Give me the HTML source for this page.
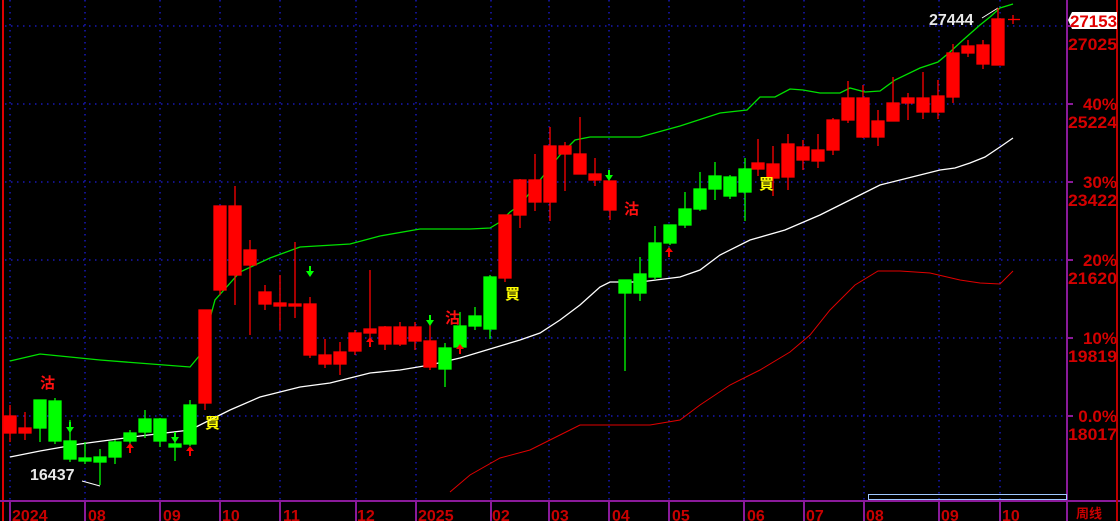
<!DOCTYPE html>
<html><head><meta charset="utf-8"><style>
html,body{margin:0;padding:0;background:#000;width:1120px;height:521px;overflow:hidden}
svg{display:block}
text{font-family:"Liberation Sans","Noto Sans CJK SC",sans-serif;font-weight:bold}
</style></head><body>
<svg width="1120" height="521" viewBox="0 0 1120 521" xmlns="http://www.w3.org/2000/svg">
<rect width="1120" height="521" fill="#000"/>
<line x1="3" y1="0" x2="3" y2="521" stroke="#e00000" stroke-width="2"/>
<g stroke="#1c1cd8" stroke-width="1.3" stroke-dasharray="1.5,4.5">
<line x1="5" y1="26" x2="1066" y2="26"/><line x1="5" y1="104" x2="1066" y2="104"/><line x1="5" y1="182" x2="1066" y2="182"/><line x1="5" y1="260" x2="1066" y2="260"/><line x1="5" y1="338" x2="1066" y2="338"/><line x1="5" y1="416" x2="1066" y2="416"/>
<line x1="10" y1="0" x2="10" y2="500"/><line x1="85" y1="0" x2="85" y2="500"/><line x1="160" y1="0" x2="160" y2="500"/><line x1="220" y1="0" x2="220" y2="500"/><line x1="280" y1="0" x2="280" y2="500"/><line x1="356" y1="0" x2="356" y2="500"/><line x1="416" y1="0" x2="416" y2="500"/><line x1="491" y1="0" x2="491" y2="500"/><line x1="549" y1="0" x2="549" y2="500"/><line x1="609" y1="0" x2="609" y2="500"/><line x1="669" y1="0" x2="669" y2="500"/><line x1="744" y1="0" x2="744" y2="500"/><line x1="804" y1="0" x2="804" y2="500"/><line x1="864" y1="0" x2="864" y2="500"/><line x1="939" y1="0" x2="939" y2="500"/><line x1="1000" y1="0" x2="1000" y2="500"/>
</g>
<line x1="1067" y1="0" x2="1067" y2="521" stroke="#8a1a9a" stroke-width="2"/>
<line x1="0" y1="501" x2="1120" y2="501" stroke="#8a1a9a" stroke-width="2"/>
<line x1="1117" y1="0" x2="1117" y2="521" stroke="#c00000" stroke-width="2"/>
<g stroke="#8a1a9a" stroke-width="2"><line x1="1067" y1="26" x2="1073" y2="26"/><line x1="1067" y1="104" x2="1073" y2="104"/><line x1="1067" y1="182" x2="1073" y2="182"/><line x1="1067" y1="260" x2="1073" y2="260"/><line x1="1067" y1="338" x2="1073" y2="338"/><line x1="1067" y1="416" x2="1073" y2="416"/>
<line x1="10" y1="502" x2="10" y2="521"/><line x1="85" y1="502" x2="85" y2="521"/><line x1="160" y1="502" x2="160" y2="521"/><line x1="220" y1="502" x2="220" y2="521"/><line x1="280" y1="502" x2="280" y2="521"/><line x1="356" y1="502" x2="356" y2="521"/><line x1="416" y1="502" x2="416" y2="521"/><line x1="491" y1="502" x2="491" y2="521"/><line x1="549" y1="502" x2="549" y2="521"/><line x1="609" y1="502" x2="609" y2="521"/><line x1="669" y1="502" x2="669" y2="521"/><line x1="744" y1="502" x2="744" y2="521"/><line x1="804" y1="502" x2="804" y2="521"/><line x1="864" y1="502" x2="864" y2="521"/><line x1="939" y1="502" x2="939" y2="521"/><line x1="1000" y1="502" x2="1000" y2="521"/><line x1="1067" y1="502" x2="1067" y2="521"/></g>
<rect x="868.5" y="494.5" width="198" height="5" fill="none" stroke="#a0c8ff" stroke-width="1"/>

<polyline fill="none" stroke="#00e000" stroke-width="1.3" points="10,361 40,354 100,360 190,367 200,355 215,300 240,272 270,258 300,247 350,244 380,236 420,229 470,229 490,228 500,222 510,212 520,205 540,180 560,155 575,140 590,137 640,137 680,126 720,113 747,110 760,97 775,97 790,89 803,90 820,93 840,93 850,88 865,92 880,91 895,80 920,68 938,62 950,52 963,40 980,25 990,17 1000,8 1013,4"/>
<polyline fill="none" stroke="#ffffff" stroke-width="1.3" points="10,457 40,451 80,444 140,436 190,430 230,410 260,397 300,387 330,383 370,373 400,370 430,365 460,358 480,352 500,346 520,340 540,333 560,320 580,305 600,287 610,282 640,282 680,277 700,270 720,255 750,240 785,230 820,215 860,195 880,185 900,180 920,175 940,170 955,168 970,163 985,157 1000,147 1013,138"/>
<polyline fill="none" stroke="#e00000" stroke-width="1" points="450,492 470,475 500,458 530,450 560,435 580,425 600,425 650,425 680,420 700,405 730,385 760,370 790,352 810,335 830,310 855,285 878,271 900,271 930,273 960,280 980,283 1000,284 1013,271"/>
<polyline fill="none" stroke="#ffffff" stroke-width="1" points="82,481 100,486"/>
<polyline fill="none" stroke="#ffffff" stroke-width="1" points="982,18 998,8"/>

<g stroke="#ff0000" fill="#ff0000" stroke-width="1.3">
<line x1="10" y1="405" x2="10" y2="442"/><rect x="4" y="416" width="12" height="17"/>
<line x1="25" y1="412" x2="25" y2="440"/><rect x="19" y="428" width="12" height="5"/>
<line x1="205" y1="310" x2="205" y2="410"/><rect x="199" y="310" width="12" height="93"/>
<line x1="220" y1="206" x2="220" y2="295"/><rect x="214" y="206" width="12" height="84"/>
<line x1="235" y1="186" x2="235" y2="305"/><rect x="229" y="206" width="12" height="69"/>
<line x1="250" y1="240" x2="250" y2="335"/><rect x="244" y="250" width="12" height="15"/>
<line x1="265" y1="285" x2="265" y2="310"/><rect x="259" y="292" width="12" height="12"/>
<line x1="280" y1="275" x2="280" y2="330"/><rect x="274" y="303" width="12" height="3"/>
<line x1="295" y1="242" x2="295" y2="318"/><rect x="289" y="304" width="12" height="2"/>
<line x1="310" y1="297" x2="310" y2="358"/><rect x="304" y="304" width="12" height="51"/>
<line x1="325" y1="339" x2="325" y2="368"/><rect x="319" y="355" width="12" height="9"/>
<line x1="340" y1="342" x2="340" y2="375"/><rect x="334" y="352" width="12" height="12"/>
<line x1="355" y1="330" x2="355" y2="355"/><rect x="349" y="333" width="12" height="18"/>
<line x1="370" y1="270" x2="370" y2="345"/><rect x="364" y="329" width="12" height="4"/>
<line x1="385" y1="326" x2="385" y2="350"/><rect x="379" y="327" width="12" height="17"/>
<line x1="400" y1="322" x2="400" y2="346"/><rect x="394" y="327" width="12" height="17"/>
<line x1="415" y1="322" x2="415" y2="350"/><rect x="409" y="327" width="12" height="14"/>
<line x1="430" y1="319" x2="430" y2="370"/><rect x="424" y="341" width="12" height="26"/>
<line x1="505" y1="215" x2="505" y2="282"/><rect x="499" y="215" width="12" height="63"/>
<line x1="520" y1="179" x2="520" y2="228"/><rect x="514" y="180" width="12" height="35"/>
<line x1="535" y1="154" x2="535" y2="211"/><rect x="529" y="180" width="12" height="22"/>
<line x1="550" y1="127" x2="550" y2="221"/><rect x="544" y="146" width="12" height="56"/>
<line x1="565" y1="142" x2="565" y2="191"/><rect x="559" y="146" width="12" height="8"/>
<line x1="580" y1="117" x2="580" y2="174"/><rect x="574" y="154" width="12" height="20"/>
<line x1="595" y1="158" x2="595" y2="186"/><rect x="589" y="174" width="12" height="6"/>
<line x1="610" y1="181" x2="610" y2="220"/><rect x="604" y="181" width="12" height="29"/>
<line x1="758" y1="139" x2="758" y2="176"/><rect x="752" y="163" width="12" height="6"/>
<line x1="773" y1="146" x2="773" y2="196"/><rect x="767" y="164" width="12" height="14"/>
<line x1="788" y1="134" x2="788" y2="190"/><rect x="782" y="144" width="12" height="33"/>
<line x1="803" y1="140" x2="803" y2="170"/><rect x="797" y="147" width="12" height="13"/>
<line x1="818" y1="134" x2="818" y2="168"/><rect x="812" y="150" width="12" height="11"/>
<line x1="833" y1="118" x2="833" y2="155"/><rect x="827" y="120" width="12" height="30"/>
<line x1="848" y1="81" x2="848" y2="123"/><rect x="842" y="98" width="12" height="22"/>
<line x1="863" y1="85" x2="863" y2="138"/><rect x="857" y="98" width="12" height="39"/>
<line x1="878" y1="110" x2="878" y2="146"/><rect x="872" y="121" width="12" height="16"/>
<line x1="893" y1="77" x2="893" y2="120"/><rect x="887" y="103" width="12" height="18"/>
<line x1="908" y1="93" x2="908" y2="120"/><rect x="902" y="98" width="12" height="5"/>
<line x1="923" y1="72" x2="923" y2="119"/><rect x="917" y="98" width="12" height="14"/>
<line x1="938" y1="80" x2="938" y2="119"/><rect x="932" y="96" width="12" height="16"/>
<line x1="953" y1="44" x2="953" y2="103"/><rect x="947" y="53" width="12" height="44"/>
<line x1="968" y1="40" x2="968" y2="57"/><rect x="962" y="46" width="12" height="7"/>
<line x1="983" y1="40" x2="983" y2="69"/><rect x="977" y="45" width="12" height="19"/>
<line x1="998" y1="8" x2="998" y2="65"/><rect x="992" y="19" width="12" height="46"/>
<line x1="1013" y1="15" x2="1013" y2="24"/><line x1="1008" y1="19.5" x2="1020" y2="19.5"/>
</g>
<g stroke="#00ff00" fill="#00ff00" stroke-width="1.3">
<line x1="40" y1="400" x2="40" y2="442"/><rect x="34" y="400" width="12" height="28"/>
<line x1="55" y1="398" x2="55" y2="444"/><rect x="49" y="401" width="12" height="40"/>
<line x1="70" y1="420" x2="70" y2="462"/><rect x="64" y="441" width="12" height="18"/>
<line x1="85" y1="442" x2="85" y2="464"/><rect x="79" y="458" width="12" height="3"/>
<line x1="100" y1="449" x2="100" y2="485"/><rect x="94" y="457" width="12" height="5"/>
<line x1="115" y1="440" x2="115" y2="464"/><rect x="109" y="442" width="12" height="15"/>
<line x1="130" y1="430" x2="130" y2="444"/><rect x="124" y="433" width="12" height="8"/>
<line x1="145" y1="410" x2="145" y2="438"/><rect x="139" y="419" width="12" height="13"/>
<line x1="160" y1="418" x2="160" y2="447"/><rect x="154" y="419" width="12" height="22"/>
<line x1="175" y1="432" x2="175" y2="461"/><rect x="169" y="444" width="12" height="3"/>
<line x1="190" y1="400" x2="190" y2="446"/><rect x="184" y="405" width="12" height="39"/>
<line x1="445" y1="343" x2="445" y2="387"/><rect x="439" y="348" width="12" height="21"/>
<line x1="460" y1="312" x2="460" y2="352"/><rect x="454" y="326" width="12" height="21"/>
<line x1="475" y1="307" x2="475" y2="330"/><rect x="469" y="316" width="12" height="10"/>
<line x1="490" y1="275" x2="490" y2="339"/><rect x="484" y="277" width="12" height="52"/>
<line x1="625" y1="280" x2="625" y2="371"/><rect x="619" y="280" width="12" height="13"/>
<line x1="640" y1="257" x2="640" y2="301"/><rect x="634" y="274" width="12" height="19"/>
<line x1="655" y1="226" x2="655" y2="280"/><rect x="649" y="243" width="12" height="34"/>
<line x1="670" y1="225" x2="670" y2="245"/><rect x="664" y="225" width="12" height="18"/>
<line x1="685" y1="192" x2="685" y2="228"/><rect x="679" y="209" width="12" height="16"/>
<line x1="700" y1="172" x2="700" y2="211"/><rect x="694" y="189" width="12" height="20"/>
<line x1="715" y1="162" x2="715" y2="200"/><rect x="709" y="176" width="12" height="13"/>
<line x1="730" y1="175" x2="730" y2="199"/><rect x="724" y="177" width="12" height="19"/>
<line x1="745" y1="158" x2="745" y2="221"/><rect x="739" y="169" width="12" height="23"/>
</g>
<g fill="#00ff00"><path d="M66,427h8l-4,6z"/><rect x="69" y="422" width="2" height="6"/>
<path d="M171,437h8l-4,6z"/><rect x="174" y="432" width="2" height="6"/>
<path d="M306,271h8l-4,6z"/><rect x="309" y="266" width="2" height="6"/>
<path d="M426,320h8l-4,6z"/><rect x="429" y="315" width="2" height="6"/>
<path d="M605,175h8l-4,6z"/><rect x="608" y="170" width="2" height="6"/></g>
<g fill="#ff0000"><path d="M126,448h8l-4,-5z"/><rect x="129" y="447" width="2" height="6"/>
<path d="M186,451h8l-4,-5z"/><rect x="189" y="450" width="2" height="6"/>
<path d="M366,342h8l-4,-5z"/><rect x="369" y="341" width="2" height="6"/>
<path d="M456,349h8l-4,-5z"/><rect x="459" y="348" width="2" height="6"/>
<path d="M665,252h8l-4,-5z"/><rect x="668" y="251" width="2" height="6"/></g>
<g font-size="15" fill="#ff1010">
<text x="40" y="388">沽</text><text x="445" y="323">沽</text><text x="624" y="214">沽</text></g>
<g font-size="15" fill="#ffff00">
<text x="205" y="428">買</text><text x="505" y="299">買</text><text x="759" y="189">買</text></g>
<text x="30" y="480" font-size="16" fill="#e8e8e8">16437</text>
<text x="929" y="25" font-size="16" fill="#e8e8e8">27444</text>
<g font-size="17" fill="#d40000" text-anchor="end" textLength="49">
<text x="1117" y="50" textLength="49" lengthAdjust="spacingAndGlyphs">27025</text>
<text x="1117" y="110">40%</text><text x="1117" y="128" textLength="49" lengthAdjust="spacingAndGlyphs">25224</text>
<text x="1117" y="188">30%</text><text x="1117" y="206" textLength="49" lengthAdjust="spacingAndGlyphs">23422</text>
<text x="1117" y="266">20%</text><text x="1117" y="284" textLength="49" lengthAdjust="spacingAndGlyphs">21620</text>
<text x="1117" y="344">10%</text><text x="1117" y="362" textLength="49" lengthAdjust="spacingAndGlyphs">19819</text>
<text x="1117" y="422">0.0%</text><text x="1117" y="440" textLength="49" lengthAdjust="spacingAndGlyphs">18017</text>
</g>
<path d="M1068,20 l4,-8 h45 v17 h-45z" fill="#fff"/>
<text x="1117" y="27" font-size="17" fill="#e00000" text-anchor="end" textLength="47" lengthAdjust="spacingAndGlyphs">27153</text>
<g font-size="16" fill="#c80000">
<text x="12" y="521">2024</text><text x="88" y="521">08</text><text x="163" y="521">09</text><text x="222" y="521">10</text><text x="283" y="521">11</text><text x="357" y="521">12</text><text x="418" y="521">2025</text><text x="492" y="521">02</text><text x="551" y="521">03</text><text x="612" y="521">04</text><text x="672" y="521">05</text><text x="747" y="521">06</text><text x="806" y="521">07</text><text x="866" y="521">08</text><text x="941" y="521">09</text><text x="1002" y="521">10</text>
<text x="1076" y="518" font-size="13">周线</text></g>
</svg>
</body></html>
